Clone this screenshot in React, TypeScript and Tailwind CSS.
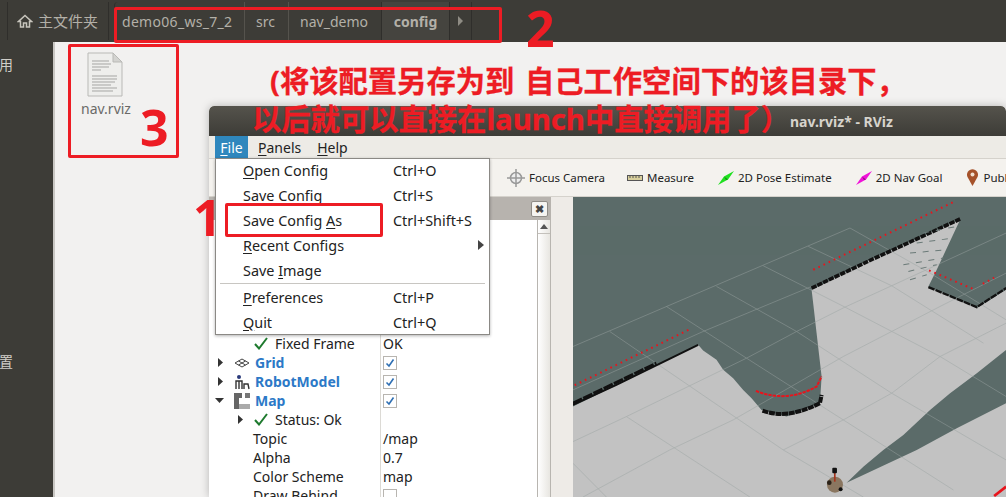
const menu = [
  { label: "Open Config", under: 0, shortcut: "Ctrl+O" },
  { label: "Save Config", under: -1, shortcut: "Ctrl+S" },
  { label: "Save Config As", under: 12, shortcut: "Ctrl+Shift+S" },
  { label: "Recent Configs", under: 0, shortcut: "", arrow: true },
  { label: "Save Image", under: 5, shortcut: "" },
  { sep: true },
  { label: "Preferences", under: 0, shortcut: "Ctrl+P" },
  { label: "Quit", under: 0, shortcut: "Ctrl+Q" },
];

function Under({ text, at }: { text: string; at: number }) {
  if (at < 0) return <>{text}</>;
  return (
    <>
      {text.slice(0, at)}
      <span className="underline underline-offset-2">{text[at]}</span>
      {text.slice(at + 1)}
    </>
  );
}

function Check({ on }: { on: boolean }) {
  return (
    <span className="flex h-[14px] w-[14px] items-center justify-center border border-[#b8b5b0] bg-white">
      {on && (
        <svg width="10" height="10" viewBox="0 0 10 10">
          <path d="M1.5 5.5 L4 8 L8.5 1.5" fill="none" stroke="#2f6fb3" strokeWidth="1.6" />
        </svg>
      )}
    </span>
  );
}

function Tick() {
  return (
    <svg width="14" height="13" viewBox="0 0 14 13" className="shrink-0">
      <path d="M1 7 L5 11.5 L13 1" fill="none" stroke="#1e7a2e" strokeWidth="2" />
    </svg>
  );
}

function Arrow({ down }: { down?: boolean }) {
  return (
    <svg width="9" height="9" viewBox="0 0 9 9">
      <path d={down ? "M0 2 L9 2 L4.5 7 Z" : "M1 0 L6 4.5 L1 9 Z"} fill="#333" />
    </svg>
  );
}

function Row({ children, value }: { children?: React.ReactNode; value?: React.ReactNode }) {
  return (
    <div className="flex h-[19px] shrink-0 items-center">
      <div className="flex w-[170px] shrink-0 items-center">{children}</div>
      <div className="flex h-full items-center border-l border-[#dcdad5] pl-[2px]">{value}</div>
    </div>
  );
}

function MapView() {
  return (
    <svg viewBox="10 22 1298 899" className="h-full w-full" preserveAspectRatio="xMinYMin slice">
      <rect x="0" y="0" width="1308" height="921" fill="#5b6b69" />
      <path
        d="M10 650 L385 465 L400 482 L440 510 L460 540 L490 565 L520 600 L545 625 L575 660 L650 680 L750 640 L755 560 L748 500 L740 430 L732 360 L725 300 L900 210 L1170 90 L1100 240 L1075 290 L1220 355 L1308 300 L1308 921 L10 921 Z"
        fill="#c2c2c2"
      />
      <path d="M830 878 L880 830 L940 780 L1000 735 L1080 660 L1140 610 L1220 550 L1308 480 L1308 640 L1160 715 L1040 780 Z" fill="#5b6b69" />
      <g stroke="#9ba5a3" strokeWidth="2" opacity="0.7" fill="none">
        <path d="M10 470 L840 115" />
        <path d="M10 600 L400 425 L725 290" />
        <path d="M10 755 L170 680 L355 590 L530 505 L680 425 L825 352 L965 288 L1308 130" />
        <path d="M40 921 L300 780 L490 690 L820 500 L965 425 L1110 350 L1308 250" />
        <path d="M640 780 L820 690 L965 610 L1110 500 L1308 400" />
        <path d="M120 425 L640 780 L880 921" />
        <path d="M290 350 L530 505 L820 690 L1150 900" />
        <path d="M440 290 L680 425 L965 610 L1308 810" />
        <path d="M580 228 L825 352 L1110 500 L1308 620" />
        <path d="M715 170 L965 288 L1240 460" />
        <path d="M840 115 L1080 250 L1308 390" />
        <path d="M10 820 L110 921" />
        <path d="M170 680 L540 921" />
      </g>
      <g stroke="#111" fill="none">
        <path d="M10 645 L140 585 L385 465" strokeWidth="6" />
        <path d="M10 640 L260 520" strokeWidth="9" strokeDasharray="30 4" />
        <path d="M725 295 L900 212 L1170 88" strokeWidth="11" strokeDasharray="16 3" />
        <path d="M1075 292 L1220 352 L1308 295" strokeWidth="7" strokeDasharray="20 3" />
        <path d="M578 662 Q650 690 750 640 L755 615" strokeWidth="12" strokeDasharray="18 2" />
      </g>
      <g stroke="#e8141c" strokeWidth="6" strokeDasharray="5 12" fill="none">
        <path d="M15 586 L365 416" />
        <path d="M730 240 L1152 36" />
        <path d="M1077 242 L1210 298" />
        <path d="M1238 282 L1272 264" />
      </g>
      <path d="M558 603 Q650 640 740 590 L755 560" stroke="#e8141c" strokeWidth="6" strokeDasharray="10 3" fill="none" />
      <path d="M1272 918 L1308 890" stroke="#e8141c" strokeWidth="8" fill="none" />
      <g stroke="#6b7a78" strokeWidth="3" strokeDasharray="18 20" fill="none">
        <path d="M1060 130 L1160 110" />
        <path d="M1040 160 L1150 145" />
        <path d="M1020 190 L1130 180" />
        <path d="M1000 225 L1120 205" />
        <path d="M1015 245 L1100 225" />
        <path d="M1020 270 L1070 255" />
      </g>
      <circle cx="795" cy="884" r="24" fill="#8a7660" />
      <circle cx="778" cy="878" r="7" fill="#2a2118" />
      <circle cx="812" cy="898" r="6" fill="#111" />
      <rect x="792" y="845" width="5" height="30" fill="#a5341c" />
      <rect x="787" y="833" width="14" height="17" rx="3" fill="#111" />
    </svg>
  );
}

const tools = [
  {
    name: "Focus Camera",
    gap: "mr-[22px]",
    icon: (
      <svg width="18" height="18" viewBox="0 0 18 18">
        <circle cx="9" cy="9" r="5.5" fill="#eee" stroke="#999" strokeWidth="1.5" />
        <path d="M9 0 V18 M0 9 H18" stroke="#999" strokeWidth="1.5" />
      </svg>
    ),
  },
  {
    name: "Measure",
    gap: "mr-[24px]",
    icon: (
      <svg width="16" height="6" viewBox="0 0 16 6">
        <rect x="0.5" y="0.5" width="15" height="5" fill="#d8cf9c" stroke="#555" />
        <path d="M3 1 V3 M6 1 V3 M9 1 V3 M12 1 V3" stroke="#555" />
      </svg>
    ),
  },
  {
    name: "2D Pose Estimate",
    gap: "mr-[24px]",
    icon: (
      <svg width="16" height="14" viewBox="0 0 16 14">
        <path d="M0 14 L6 5.5 L16 0 L10 8.5 Z" fill="#1fe01f" />
        <path d="M6 5.5 L10 8.5 L8 9 Z" fill="#138a13" />
      </svg>
    ),
  },
  {
    name: "2D Nav Goal",
    gap: "mr-[24px]",
    icon: (
      <svg width="16" height="14" viewBox="0 0 16 14">
        <path d="M0 14 L6 5.5 L16 0 L10 8.5 Z" fill="#f012d8" />
        <path d="M6 5.5 L10 8.5 L8 9 Z" fill="#8f0c80" />
      </svg>
    ),
  },
  {
    name: "Publish Point",
    gap: "",
    icon: (
      <svg width="13" height="17" viewBox="0 0 13 17">
        <path d="M6.5 17 L1.5 8 A5.5 5.5 0 1 1 11.5 8 Z" fill="#a5522a" />
        <circle cx="6.5" cy="5.5" r="2" fill="#f0e0d0" />
      </svg>
    ),
  },
];

export default function App() {
  return (
    <div className="relative h-[497px] w-[1006px] overflow-hidden bg-[#f2f1f0] font-['Noto_Sans','Noto_Sans_CJK_SC',sans-serif]">
      {/* nautilus path bar */}
      <div className="flex h-[42px] items-center bg-[#3d3c37] pl-[7px] text-[14px] text-[#b3b0a8]">
        <div className="flex h-[38px] w-[102px] items-center gap-[5px] border-x border-[#2f2e2b] pl-[9px] text-[15px]">
          <svg width="16" height="14" viewBox="0 0 16 14"><path d="M8 1.5 L14.5 7.5 H12.5 V13 H9.5 V9 H6.5 V13 H3.5 V7.5 H1.5 Z" fill="none" stroke="#c8c5bd" strokeWidth="1.5" /></svg>
          <span>主文件夹</span>
        </div>
        <div className="ml-[5px] flex h-[38px] items-center rounded-t border-l border-[#2f2e2b]">
          <span className="flex h-full w-[130px] items-center border-r border-[#55534d] pl-[7px] tracking-[0.3px]">demo06_ws_7_2</span>
          <span className="flex h-full w-[44px] items-center justify-center border-r border-[#55534d] pr-[2px]">src</span>
          <span className="flex h-full w-[93px] items-center justify-center border-r border-[#2f2e2b] pr-[2px]">nav_demo</span>
          <span className="flex h-full w-[67px] items-center justify-center bg-[#45443f] font-bold">config</span>
          <span className="flex h-full w-[23px] items-center justify-center border-x border-[#2f2e2b]">
            <svg width="6" height="10" viewBox="0 0 6 10"><path d="M0 0 L5 5 L0 10 Z" fill="#8f8c84" /></svg>
          </span>
        </div>
      </div>

      <div className="flex h-[455px]">
        <aside className="relative w-[55px] shrink-0 border-r-2 border-[#c9c7c3] bg-[#3d3c37] text-[14px] text-[#d0cec8]">
          <span className="absolute left-[-1px] top-[12px]">用</span>
          <span className="absolute left-[-1px] top-[309px]">置</span>
        </aside>
        <main className="flex-1 pl-[20px] pt-[10px]">
          <div className="flex w-[60px] flex-col items-center">
            <svg width="36" height="45" viewBox="0 0 36 45">
              <path d="M1 1 H26 L35 10 V44 H1 Z" fill="#eeeeec" stroke="#b9b9b6" />
              <path d="M26 1 L26 10 L35 10 Z" fill="#d3d3d0" stroke="#b9b9b6" />
              <g stroke="#a5a5a3" strokeWidth="1">
                <path d="M5 9 H22 M5 12 H24 M5 15 H22 M5 18 H14 M5 24 H30 M5 27 H30 M5 30 H28 M5 33 H24 M5 36 H30 M5 39 H26" />
              </g>
            </svg>
            <span className="ml-[2px] mt-[2px] text-[14px] leading-5 text-[#6a6a68]">nav.rviz</span>
          </div>
        </main>
      </div>

      {/* rviz window */}
      <div className="absolute left-[209px] top-[106px] flex h-[391px] w-[797px] flex-col overflow-hidden rounded-t-[5px] bg-[#eeebe7] text-[14px] text-[#222] shadow-[0_0_8px_rgba(0,0,0,0.25)]">
        <div className="flex h-[30px] shrink-0 items-center rounded-t-[5px] bg-gradient-to-b from-[#55534c] to-[#3d3c37] pl-[581px] text-[14px] font-bold text-[#d6d3cc]">
          nav.rviz* - RViz
        </div>
        <div className="flex h-[22px] shrink-0 items-center bg-[#edebe6] pl-[6px]">
          <span className="flex h-[22px] w-[33px] items-center justify-center bg-[#2f87bd] text-white"><Under text="File" at={0} /></span>
          <span className="ml-[10px]"><Under text="Panels" at={0} /></span>
          <span className="ml-[16px]"><Under text="Help" at={0} /></span>
        </div>
        <div className="flex h-[39px] shrink-0 items-center border-y border-[#d5d2cc] bg-[#f4f2ee] pl-[298px] text-[11.5px]">
          {tools.map((t) => (
            <div key={t.name} className={`${t.gap} flex shrink-0 items-center gap-[4px] whitespace-nowrap`}>
              {t.icon}
              <span>{t.name}</span>
            </div>
          ))}
        </div>
        <div className="flex min-h-0 flex-1">
          <div className="flex w-[342px] shrink-0 flex-col">
            <div className="flex h-[23px] shrink-0 items-center justify-end bg-[#b7b3ae] pr-[3px]">
              <span className="flex h-[16px] w-[17px] items-center justify-center rounded-[2px] border border-[#8f8c87] bg-[#f5f4f1] text-[11px] font-bold leading-none text-[#444]">✖</span>
            </div>
            <div className="flex min-h-0 flex-1">
              <div className="flex flex-1 flex-col overflow-hidden bg-white pl-[1px] pt-[114px] leading-[19px]">
                <Row value="OK">
                  <span className="w-[44px]" />
                  <Tick />
                  <span className="ml-[7px]">Fixed Frame</span>
                </Row>
                <Row value={<Check on />}>
                  <span className="ml-[7px] w-[17px]"><Arrow /></span>
                  <svg width="16" height="10" viewBox="0 0 16 10" className="mr-[5px]"><path d="M8 1 L15 5 L8 9 L1 5 Z M4.5 3 L11.5 7 M11.5 3 L4.5 7" fill="none" stroke="#444" /></svg>
                  <b className="text-[#2c79c7]">Grid</b>
                </Row>
                <Row value={<Check on />}>
                  <span className="ml-[7px] w-[17px]"><Arrow /></span>
                  <svg width="16" height="16" viewBox="0 0 16 16" className="mr-[5px]">
                    <circle cx="5" cy="3" r="2" fill="#2a3a7a" />
                    <path d="M2 15 V7 H8 V15 M5 7 V15" fill="none" stroke="#333" strokeWidth="1.4" />
                    <path d="M10 15 V10 L14 10 L15 15" fill="none" stroke="#333" strokeWidth="1.4" />
                  </svg>
                  <b className="text-[#2c79c7]">RobotModel</b>
                </Row>
                <Row value={<Check on />}>
                  <span className="ml-[5px] w-[19px]"><Arrow down /></span>
                  <svg width="16" height="16" viewBox="0 0 16 16" className="mr-[5px]">
                    <path d="M0 0 H5 V16 H0 Z M5 0 H8 V5 H5 Z" fill="#666" />
                    <path d="M11 0 H16 V5 H11 Z" fill="#777" />
                    <path d="M5 11 H10 V16 H5 Z M10 11 H16 V16 H10 Z" fill="#aaa" />
                  </svg>
                  <b className="text-[#2c79c7]">Map</b>
                </Row>
                <Row>
                  <span className="ml-[27px] w-[17px]"><Arrow /></span>
                  <Tick />
                  <span className="ml-[7px]">Status: Ok</span>
                </Row>
                <Row value="/map"><span className="ml-[43px]">Topic</span></Row>
                <Row value="0.7"><span className="ml-[43px]">Alpha</span></Row>
                <Row value="map"><span className="ml-[43px]">Color Scheme</span></Row>
                <Row value={<Check on={false} />}><span className="ml-[43px]">Draw Behind</span></Row>
              </div>
              <div className="flex w-[14px] shrink-0 flex-col border-x border-[#b8b5b0] bg-gradient-to-r from-white to-[#e8e6e1]">
                <div className="flex h-[14px] shrink-0 items-center justify-center border-b border-[#c4c1bc]">
                  <svg width="8" height="5" viewBox="0 0 8 5"><path d="M0 5 L4 0 L8 5 Z" fill="#555" /></svg>
                </div>
              </div>
            </div>
          </div>
          <div className="w-[22px] shrink-0" />
          <div className="min-w-0 flex-1"><MapView /></div>
        </div>
      </div>

      <span className="pointer-events-none absolute left-[193px] top-[187px] text-[50px] font-bold leading-[60px] text-[#ed1c24]">1</span>

      {/* file menu */}
      <div className="absolute left-[215px] top-[158px] h-[177px] w-[275px] border border-[#8b8985] bg-white text-[14.4px] text-[#222] shadow-[0_1px_3px_rgba(0,0,0,0.3)]">
        <div className="-mt-px">
          {menu.map((m, i) =>
            m.sep ? (
              <div key={i} className="mx-[4px] mb-px h-px bg-[#c8c6c2]" />
            ) : (
              <div key={i} className="relative flex h-[25px] items-center pl-[27px]">
                <span className="w-[150px]"><Under text={m.label!} at={m.under!} /></span>
                <span>{m.shortcut}</span>
                {m.arrow && (
                  <svg width="6" height="10" viewBox="0 0 6 10" className="absolute right-[5px] top-[7px]"><path d="M0 0 L6 5 L0 10 Z" fill="#444" /></svg>
                )}
              </div>
            ),
          )}
        </div>
      </div>

      {/* annotations */}
      <div className="pointer-events-none absolute left-[114px] top-[7px] h-[36px] w-[388px] rounded-[2px] border-[3px] border-[#ed1c24]" />
      <div className="pointer-events-none absolute left-[68px] top-[44px] h-[114px] w-[111px] rounded-[2px] border-[3px] border-[#ed1c24]" />
      <div className="pointer-events-none absolute left-[225px] top-[203px] h-[34px] w-[158px] rounded-[2px] border-[3px] border-[#ed1c24]" />
      <span className="pointer-events-none absolute left-[526px] top-0 text-[50px] font-bold leading-[56px] text-[#ed1c24]">2</span>
      <span className="pointer-events-none absolute left-[140px] top-[97px] text-[50px] font-bold leading-[60px] text-[#ed1c24]">3</span>
      <span className="pointer-events-none absolute left-[270px] top-[61px] whitespace-nowrap text-[29.3px] font-bold leading-[40px] text-[#ed1c24] [-webkit-text-stroke:0.3px_#ed1c24] [word-spacing:3px]">(将该配置另存为到 自己工作空间下的该目录下，</span>
      <span className="pointer-events-none absolute left-[252px] top-[99px] whitespace-nowrap text-[29.3px] font-bold leading-[40px] text-[#ed1c24] [-webkit-text-stroke:0.3px_#ed1c24]">以后就可以直接在launch中直接调用了）</span>
    </div>
  );
}
